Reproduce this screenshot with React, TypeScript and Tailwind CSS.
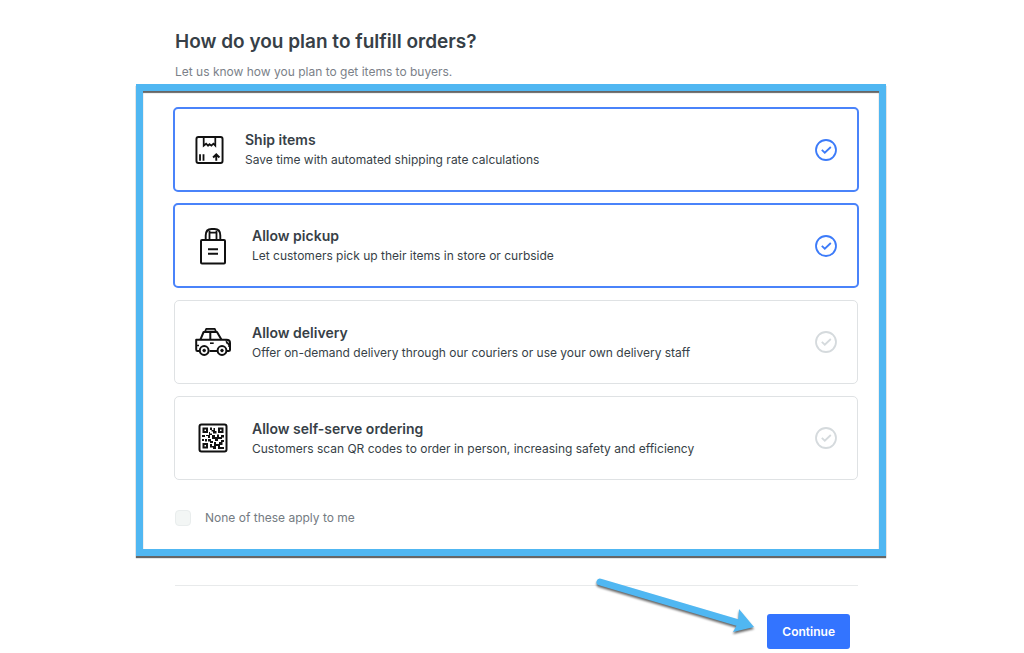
import React, { useState } from 'react'
import clsx from 'clsx'

interface Option {
  id: string
  title: string
  description: string
  icon: React.ReactNode
  iconBox: string
}

function BoxIcon() {
  return (
    <svg viewBox="0 0 30 30" className="w-[30px] h-[30px]" fill="none" stroke="#111" strokeWidth="2" aria-hidden="true">
      <rect x="1.5" y="1.5" width="27" height="27" rx="2" />
      <path d="M9 1.5V10.5L11.5 8.5L13.5 10.5L15 9L17 10.5L19 8.5L21 10.5V1.5" strokeWidth="1.8" />
      <path d="M5.2 19.5V26M8.8 19.5V26" strokeWidth="1.9" />
      <path d="M22 26V20M18.7 22.8L22 19.6L25.3 22.8" />
    </svg>
  )
}

function BagIcon() {
  return (
    <svg viewBox="0 0 36 38" className="w-9 h-[38px]" fill="none" stroke="#111" strokeWidth="2" aria-hidden="true">
      <rect x="6" y="13" width="24" height="23.5" rx="1" />
      <path d="M10.7 13V8.5C10.7 4.5 13 2 16.5 2H19.5C23 2 25.3 4.5 25.3 8.5V13" strokeWidth="1.9" />
      <path d="M14.5 13V3.5M21.5 13V3.5M14.5 5.6H21.5" strokeWidth="1.8" />
      <path d="M13 22.3H23M13 26.7H23" />
    </svg>
  )
}

function CarIcon() {
  return (
    <svg viewBox="0 0 36 30" className="w-9 h-[30px]" fill="none" stroke="#111" strokeWidth="2" strokeLinejoin="round" aria-hidden="true">
      <path d="M9.8 5L11.2 1.8H19.8L21.2 5Z" fill="#bbb" strokeWidth="1.7" />
      <path d="M5.3 12.8L8.6 5H22L26.5 12.8M15.3 5V12.8" />
      <path d="M4.5 24H2.5Q1.2 24 1.2 22.5V12.8H31.5Q35 12.8 35 16V22.5Q35 24 33.5 24H32M14.5 24H22" />
      <path d="M1.5 18.5H4M33 19H35" strokeWidth="1.5" />
      <path d="M31 13.5L34.5 17.5H33Q31 16.5 31 13.5Z" fill="#111" strokeWidth="1" />
      <path d="M15 16.2H18.7" strokeWidth="1.6" />
      <circle cx="9.2" cy="23.5" r="4.4" fill="#fff" />
      <circle cx="9.2" cy="23.5" r="1.3" fill="#111" strokeWidth="1" />
      <circle cx="27" cy="23.5" r="4.4" fill="#fff" />
      <circle cx="27" cy="23.5" r="1.3" fill="#111" strokeWidth="1" />
    </svg>
  )
}

function QrIcon() {
  return (
    <svg viewBox="0 0 30 30" className="w-[30px] h-[30px]" fill="none" stroke="#111" strokeWidth="2" aria-hidden="true">
      <rect x="1.5" y="1.5" width="27" height="27" rx="2" />
      <path d="M5.5 5.5H9V9H5.5ZM21 5.5H24.5V9H21ZM5.5 21H9V24.5H5.5Z" strokeWidth="2" />
      <path
        d="M12 4.5H14V7H12ZM15.5 5H17V8H18.5V10.5H15V8.5H13.5V7H15.5ZM4 12H7V14H4ZM8 13H10V15H12V12H14V10.5H12V9H11V12H8ZM14 12H17V14H19V11.5H21V14H23V12H26V14.5H24V16H20V18H17V16H14ZM4 16H6V18H4ZM7 16H9V18.5H7ZM10 16H13V18H15V20H12V18.5H10ZM12 21H14V23H16V19H18V21H21V19H23V17H26V19H24.5V22H22V24H26V26H20V23H18V26H15V24.5H12Z"
        fill="#111"
        stroke="none"
      />
    </svg>
  )
}

function CheckCircle({ on }: { on: boolean }) {
  return (
    <svg viewBox="0 0 22 22" className={clsx('w-[22px] h-[22px]', on ? 'text-[#3c7bf9]' : 'text-[#d5dadd]')} fill="none" stroke="currentColor" strokeWidth="1.8" aria-hidden="true">
      <circle cx="11" cy="11" r="10" />
      <path d="M6.8 10.8L9.8 13.7L15.8 8" />
    </svg>
  )
}

const options: Option[] = [
  {
    id: 'ship',
    title: 'Ship items',
    description: 'Save time with automated shipping rate calculations',
    icon: <BoxIcon />,
    iconBox: 'w-[29px]',
  },
  {
    id: 'pickup',
    title: 'Allow pickup',
    description: 'Let customers pick up their items in store or curbside',
    icon: <BagIcon />,
    iconBox: 'w-9',
  },
  {
    id: 'delivery',
    title: 'Allow delivery',
    description: 'Offer on-demand delivery through our couriers or use your own delivery staff',
    icon: <CarIcon />,
    iconBox: 'w-9',
  },
  {
    id: 'self-serve',
    title: 'Allow self-serve ordering',
    description: 'Customers scan QR codes to order in person, increasing safety and efficiency',
    icon: <QrIcon />,
    iconBox: 'w-9',
  },
]

export default function App() {
  const [selected, setSelected] = useState<string[]>(['ship', 'pickup'])

  const toggle = (id: string) => {
    setSelected(prev => (prev.includes(id) ? prev.filter(x => x !== id) : [...prev, id]))
  }

  return (
    <main className="min-h-screen bg-white pt-7 pr-0.5 font-['Inter',sans-serif] text-[#373f47]">
      <form className="mx-auto max-w-[750px]" onSubmit={e => e.preventDefault()}>
        <header className="px-[39px] h-14">
          <h1 className="text-[19px] leading-7 font-semibold">How do you plan to fulfill orders?</h1>
          <p className="mt-2 text-[12px] leading-4 text-[#7b8189]">Let us know how you plan to get items to buyers.</p>
        </header>

        <section className="border-[7px] border-[#50b7f2] pl-[31px] pr-[21px] pt-[17px] pb-[21px] shadow-[0_2px_1px_rgba(0,0,0,0.6),inset_0_2px_1px_rgba(0,0,0,0.6)]">
          <div className="flex flex-col gap-3">
            {options.map(option => {
              const on = selected.includes(option.id)
              return (
                <label
                  key={option.id}
                  className={clsx(
                    'flex items-center px-5 rounded-[5px] cursor-pointer',
                    on ? 'border-2 -mx-px -mt-px min-h-[85px] border-[#4a83fa]' : 'border min-h-[84px] border-[#dfe2e4]'
                  )}
                >
                  <input type="checkbox" className="sr-only" checked={on} onChange={() => toggle(option.id)} />
                  <span className={clsx('flex justify-center shrink-0', option.iconBox)}>{option.icon}</span>
                  <span className="flex-1 pt-px pl-[21px]">
                    <span className="block text-[14px] leading-5 font-semibold">{option.title}</span>
                    <span className="block text-[12px] leading-5">{option.description}</span>
                  </span>
                  <CheckCircle on={on} />
                </label>
              )
            })}
          </div>

          <label className="mt-7 flex items-center gap-3.5 pl-px text-[12px] leading-5 text-[#747b82]">
            <input type="checkbox" className="appearance-none w-4 h-4 rounded-sm border border-[#e9eded] bg-[#f3f6f5]" />
            None of these apply to me
          </label>
        </section>

        <footer className="relative ml-[39px] mr-7 mt-[29px] border-t border-[#e8eaeb] pt-7 pr-2 flex justify-end">
          <svg viewBox="0 0 166 62" className="absolute right-[101px] -top-[9px] w-[166px] h-[62px] overflow-visible drop-shadow-[0_2px_1px_rgba(0,0,0,0.6)]" aria-hidden="true">
            <path d="M9 5L148 46" stroke="#50b7f2" strokeWidth="7" strokeLinecap="round" />
            <path d="M148 32L163 50L142 55L147 46Z" fill="#50b7f2" />
          </svg>
          <button type="submit" className="h-[35px] px-[15px] rounded-[3px] bg-[#3374ff] text-white text-[12px] font-semibold">
            Continue
          </button>
        </footer>
      </form>
    </main>
  )
}
